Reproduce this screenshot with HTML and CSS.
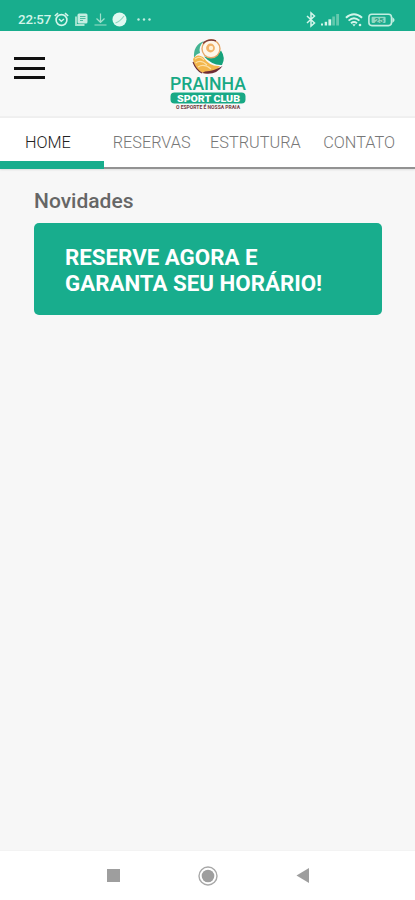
FILE: index.html
```html
<!DOCTYPE html>
<html lang="pt-BR">
<head>
    <meta charset="UTF-8">
    <meta name="viewport" content="width=device-width, initial-scale=1.0">
    <title>Prainha Sport Club</title>
    <link rel="stylesheet" href="styles.css">
</head>
<body>
    <div class="status-bar">
        <div class="status-left">
            <span class="time">22:57</span>
            <!-- alarm -->
            <svg width="15" height="15" viewBox="0 0 15 15" fill="none" stroke="#d3f5ea" stroke-width="1.6">
                <circle cx="7.5" cy="8" r="5.4"/>
                <path d="M0.8 4 L4 1.2 M14.2 4 L11 1.2"/>
                <path d="M5 7 L7.3 9.2 L10 7" stroke-width="1.4"/>
            </svg>
            <!-- notes -->
            <svg class="icon-notes" width="13" height="13" viewBox="0 0 13 13">
                <path d="M1 3.5 V12 H9.5" fill="none" stroke="#a9e5d2" stroke-width="1.8"/>
                <rect x="2.5" y="0.5" width="10" height="10" rx="1.5" fill="#c3eee1"/>
                <path d="M5 3.5 H10.5 M5 5.5 H10.5 M5 7.5 H8" stroke="#3db898" stroke-width="0.9"/>
            </svg>
            <!-- download -->
            <svg class="icon-download" width="13" height="13" viewBox="0 0 13 13" fill="none" stroke="#9fe0cc" stroke-width="1.2">
                <path d="M6.5 0.5 V9 M2.5 5.5 L6.5 9.3 L10.5 5.5 M0.5 12 H12.5"/>
            </svg>
            <svg class="icon-round" width="15" height="15" viewBox="0 0 15 15">
                <circle cx="7.5" cy="7.5" r="7" fill="#e0f9f1"/>
                <path d="M3.5 11 Q8 9.5 12 4" fill="none" stroke="#8bd6bf" stroke-width="1.1"/>
            </svg>
            <svg class="icon-more" width="14" height="3" viewBox="0 0 14 3" fill="#c3eee1">
                <circle cx="1.5" cy="1.5" r="1.2"/>
                <circle cx="7" cy="1.5" r="1.2"/>
                <circle cx="12.5" cy="1.5" r="1.2"/>
            </svg>
        </div>
        <div class="status-right">
            <!-- bluetooth -->
            <svg width="10" height="15" viewBox="0 0 10 15" fill="none" stroke="#d3f5ea" stroke-width="1.5">
                <path d="M1 4 L8.5 11 L5 14 V1 L8.5 4 L1 11"/>
            </svg>
            <!-- signal -->
            <svg class="icon-signal" width="20" height="13" viewBox="0 0 20 13" fill="#d3f5ea">
                <rect x="1" y="10.5" width="2" height="2"/>
                <rect x="4.7" y="8.8" width="2.4" height="3.7"/>
                <rect x="8.4" y="6.3" width="2.8" height="6.2"/>
                <rect x="12.3" y="3.5" width="2.6" height="9" fill="#66c9ae"/>
                <rect x="16.2" y="1" width="2.8" height="11.5" fill="#66c9ae"/>
            </svg>
            <!-- wifi -->
            <svg class="icon-wifi" width="18" height="14" viewBox="0 0 18 14" fill="none" stroke="#d3f5ea" stroke-width="1.9">
                <path d="M0.9 4.8 Q9 -2.2 17.1 4.8"/>
                <path d="M3.6 7.6 Q9 3 14.4 7.6"/>
                <path d="M6 10.2 Q9 7.8 12 10.2"/>
                <path d="M7.3 11.2 H10.7 L9 13.5 Z" fill="#d3f5ea" stroke="none"/>
                <circle cx="15" cy="12" r="1.3" fill="#d3f5ea" stroke="none"/>
            </svg>
            <!-- battery -->
            <svg class="icon-battery" width="27" height="14" viewBox="0 0 27 14">
                <rect x="0.9" y="1.2" width="22.6" height="11.4" rx="3" fill="none" stroke="#c3eee1" stroke-width="1.6"/>
                <rect x="3.6" y="3.7" width="14" height="6.4" rx="1" fill="#8fdac4"/>
                <path d="M24.3 4 L26.4 6 V8 L24.3 10 Z" fill="#c3eee1"/>
                <text class="battery-level" x="11.2" y="9.8" text-anchor="middle">25</text>
            </svg>
        </div>
    </div>

    <header class="header">
        <button class="menu" aria-label="Menu">
            <span></span>
            <span></span>
            <span></span>
        </button>
        <svg class="logo" width="78" height="72" viewBox="0 0 78 72">
            <!-- left wave -->
            <path d="M25 19 Q24 6 35 2 Q29 8 31 14 Q27 15 25 19 Z" fill="#45b493"/>
            <!-- sand -->
            <path d="M24 20 Q28 14 34 18 Q41 28 51 27 Q46 34 37 34.5 Q26 33 24 20 Z" fill="#f3b64b"/>
            <path d="M26 20 Q31 16 35 21 M26.5 24 Q32 20 38 26 M29 28 Q35 24 42 30" fill="none" stroke="#fce0a6" stroke-width="1.1"/>
            <!-- sea -->
            <path d="M35 17.5 Q46 20 52 11.5 Q57 19 53 26 Q44 27 35 17.5 Z" fill="#16a27b"/>
            <path d="M24 23 Q27 31 33 34" fill="none" stroke="#6e2c35" stroke-width="1.1"/>
            <path d="M33 34 Q47 37 53.5 27 Q45 32 36 32.5 Z" fill="#6e2c35"/>
            <!-- ball -->
            <circle cx="42" cy="9.8" r="9" fill="#fff7ea" stroke="#e6a96c" stroke-width="1.4"/>
            <path d="M34 4.5 Q39 -0.5 47 1.8" fill="none" stroke="#7b3b39" stroke-width="1.4"/>
            <circle cx="41.5" cy="9" r="4.4" fill="#f2b268"/>
            <circle cx="42" cy="9" r="2.2" fill="#fff2d8"/>
            <text class="logo-name" x="1" y="51" textLength="76" lengthAdjust="spacingAndGlyphs">PRAINHA</text>
            <rect x="1.5" y="53.5" width="75" height="11" rx="4" fill="#18a985"/>
            <text class="logo-club" x="8" y="62.5" textLength="63" lengthAdjust="spacingAndGlyphs">SPORT CLUB</text>
            <text class="logo-slogan" x="7" y="69.5" textLength="64" lengthAdjust="spacingAndGlyphs">O ESPORTE É NOSSA PRAIA</text>
        </svg>
    </header>

    <nav class="tabs">
        <a class="tab active">HOME</a>
        <a class="tab">RESERVAS</a>
        <a class="tab">ESTRUTURA</a>
        <a class="tab">CONTATO</a>
    </nav>

    <main class="content">
        <h2>Novidades</h2>
        <div class="banner">RESERVE AGORA E<br>GARANTA SEU HORÁRIO!</div>
    </main>

    <div class="nav-bar">
        <svg width="13" height="13" viewBox="0 0 13 13">
            <rect width="13" height="13" fill="#9e9e9e"/>
        </svg>
        <svg width="20" height="20" viewBox="0 0 20 20">
            <circle cx="10" cy="10" r="9" fill="none" stroke="#a8a8a8" stroke-width="1.4"/>
            <circle cx="10" cy="10" r="6.3" fill="#9e9e9e"/>
        </svg>
        <svg width="13" height="15" viewBox="0 0 13 15">
            <path d="M13 0 V15 L0.5 7.5 Z" fill="#9e9e9e"/>
        </svg>
    </div>
</body>
</html>
```

FILE: styles.css
```css
* { box-sizing: border-box; }
body { font-family: Roboto, "Liberation Sans", sans-serif; margin: 0; height: 900px; background: #f7f7f7; display: flex; flex-direction: column; overflow: hidden; }
svg { display: block; flex: none; overflow: visible; }

.status-bar { height: 31px; background: #18ad8d; display: flex; justify-content: space-between; padding: 8px 20px 0 18px; flex: none; }
.status-left, .status-right { display: flex; align-items: center; height: 23px; }
.time { width: 36px; font-size: 13.3px; font-weight: 500; color: #d3f5ea; letter-spacing: -0.1px; }
.icon-notes { margin-left: 6px; }
.icon-download { margin-left: 6px; }
.icon-round { margin-left: 5px; }
.icon-more { margin-left: 10px; }
.icon-signal { margin-left: 4px; }
.icon-wifi { margin-left: 5px; }
.icon-battery { margin-left: 5px; }
.battery-level { font-size: 8px; font-weight: 700; fill: #2a9f82; }

.header { height: 87px; flex: none; display: flex; background: #f8f8f8; border-bottom: 2px solid #f0f0f0; padding-left: 14px; }
.menu { width: 31px; margin: 26px 0 0; padding: 0; border: none; background: none; display: flex; flex-direction: column; justify-content: space-between; height: 22px; }
.menu span { width: 31px; height: 3px; background: #111; }
.logo { margin: 8px 0 0 124px; }
.logo-name { font-size: 18px; font-weight: 500; fill: #18a985; }
.logo-club { font-size: 9.5px; font-weight: 900; fill: #fff; }
.logo-slogan { font-size: 4.5px; font-weight: 700; fill: #6e3a40; }

.tabs { height: 51px; flex: none; display: flex; background: #fff; border-bottom: 2px solid #929292; box-shadow: 0 1px 2px rgba(0,0,0,0.1); }
.tab { width: 103.75px; flex: none; height: 51px; padding: 7px 8px 2px 0; display: flex; align-items: center; justify-content: center; font-size: 16.3px; font-weight: 300; color: #777; border-bottom: 8px solid transparent; }
.tab.active { color: #222; border-bottom-color: #18ad8d; }

.content { flex: 1; padding: 20px 33px 0 34px; }
h2 { margin: 0 0 9px; font-size: 21px; line-height: 25px; font-weight: 500; color: #666; }
.banner { height: 92px; padding: 21px 31px; background: #18ad8d; border-radius: 5px; color: #fff; font-size: 22.3px; line-height: 26px; font-weight: 700; }

.nav-bar { height: 50px; flex: none; background: #fff; border-top: 1px solid #f3f3f3; display: flex; align-items: center; justify-content: center; gap: 78px; }
```
